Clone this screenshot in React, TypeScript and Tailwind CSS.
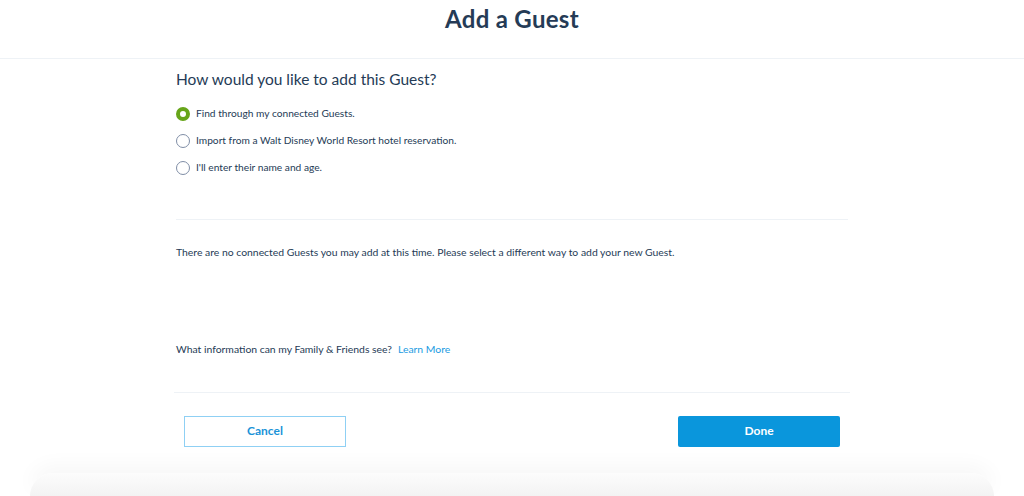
import React, { useState } from 'react';

const options = [
  'Find through my connected Guests.',
  'Import from a Walt Disney World Resort hotel reservation.',
  "I'll enter their name and age.",
];

const Radio = ({ checked }: { checked: boolean }) =>
  checked ? (
    <span className="w-[14px] h-[14px] rounded-full border-[4px] border-[#67a51a] bg-white shrink-0" />
  ) : (
    <span className="w-[14px] h-[14px] rounded-full border-[1.5px] border-[#7f8ea6] bg-white shrink-0" />
  );

export default function App() {
  const [selected, setSelected] = useState(0);

  return (
    <div className="w-[1024px] h-[496px] bg-white overflow-hidden flex flex-col font-['Lato','Noto_Sans',sans-serif] text-[#253b56]">
      {/* Header */}
      <div className="h-[59px] border-b border-[#eef2f6] flex items-center justify-center shrink-0">
        <h1 className="text-[24px] font-bold tracking-[0.3px] -mt-[20px]">Add a Guest</h1>
      </div>

      {/* Body */}
      <div className="w-[672px] mx-auto flex flex-col">
        <h2 className="text-[15.5px] mt-[9px] leading-[22px]">How would you like to add this Guest?</h2>

        <div className="flex flex-col gap-[9px] mt-[15px]">
          {options.map((label, i) => (
            <label
              key={label}
              className="flex items-center gap-[6px] h-[18px] text-[10.2px] cursor-pointer"
              onClick={() => setSelected(i)}
            >
              <Radio checked={selected === i} />
              <span>{label}</span>
            </label>
          ))}
        </div>

        <div className="h-px bg-[#eef2f6] mt-[42px]" />

        <p className="text-[10.4px] mt-[25px] leading-[14px]">
          There are no connected Guests you may add at this time. Please select a different way to add your new Guest.
        </p>

        <p className="text-[10.4px] mt-[83px] leading-[14px]">
          What information can my Family &amp; Friends see?
          <a className="text-[#1a9be2] ml-[6px] cursor-pointer">Learn More</a>
        </p>
      </div>

      <div className="w-[676px] mx-auto h-px bg-[#eef2f6] mt-[36px]" />

      {/* Footer buttons */}
      <div className="w-[656px] mx-auto flex justify-between mt-[23px]">
        <button className="w-[162px] h-[31px] border-[1.5px] border-[#8fd0f4] text-[#1a93d8] text-[12px] font-bold bg-white">
          Cancel
        </button>
        <button className="w-[162px] h-[31px] bg-[#0a96dc] text-white text-[12px] font-bold rounded-[2px]">
          Done
        </button>
      </div>

      {/* Shadowed panel below */}
      <div className="mx-[30px] mt-[26px] h-[40px] rounded-t-[40px] bg-gradient-to-b from-[#fcfcfc] to-[#f3f3f3] shadow-[0_-8px_20px_rgba(0,0,0,0.035)]" />
    </div>
  );
}
